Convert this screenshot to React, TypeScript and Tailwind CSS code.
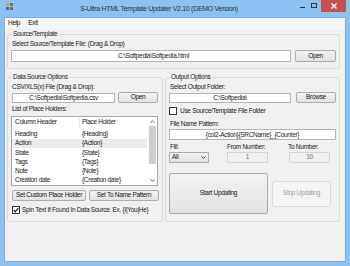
import React from "react";

const F = { fontFamily: '"Liberation Sans", Arial, sans-serif' };
const T = "text-[6.5px] tracking-[-0.3px] whitespace-nowrap";

function Btn({ w, h, children, disabled }: { w: string; h: string; children: React.ReactNode; disabled?: boolean }) {
  return (
    <div
      className={`${w} ${h} flex items-center justify-center rounded-[2px] border ${T} leading-none ${
        disabled
          ? "border-[#d9d9d9] bg-[#f4f4f4] text-[#a0a0a0]"
          : "border-[#adadad] bg-gradient-to-b from-[#f2f2f2] to-[#e3e3e3] text-[#111]"
      }`}
    >
      {children}
    </div>
  );
}

function Check() {
  return (
    <div className="w-[8px] h-[8px] border border-[#333] bg-white flex items-center justify-center">
      <svg width="6" height="6" viewBox="0 0 6 6">
        <path d="M0.8 3.2 L2.3 4.8 L5.2 1" stroke="#111" strokeWidth="1.2" fill="none" />
      </svg>
    </div>
  );
}

function GroupLabel({ children }: { children: React.ReactNode }) {
  return (
    <div className={`absolute -top-[5px] left-[4px] bg-[#f0f0f0] px-[1px] ${T} leading-[8px] text-[#222]`}>
      {children}
    </div>
  );
}

const rows: [string, string][] = [
  ["Heading", "{Heading}"],
  ["Action", "{Action}"],
  ["State", "{State}"],
  ["Tags", "{Tags}"],
  ["Note", "{Note}"],
  ["Creation date", "{Creation date}"],
];

export default function App() {
  return (
    <div style={F} className="w-[350px] h-[266px] bg-[#8cc2f1] flex flex-col px-[4px] pb-[4px] overflow-hidden text-[#1a1a1a]">
      {/* Title bar */}
      <div className="h-[17px] flex items-start relative">
        <div className="mt-[3px] ml-[2px] w-[7px] h-[7px]">
          <svg width="7" height="7" viewBox="0 0 7 7">
            <rect x="0" y="0" width="3" height="3" fill="#e0a020" />
            <rect x="4" y="0" width="3" height="3" fill="#3a9a3a" />
            <rect x="0" y="4" width="3" height="3" fill="#2a6fd0" />
            <rect x="4" y="4" width="3" height="3" fill="#d04040" />
          </svg>
        </div>
        <div className="flex-1 text-center text-[7px] tracking-[-0.3px] leading-[17px] text-[#333] pl-[8px] whitespace-nowrap">
          S-Ultra HTML Template Updater V2.10 (DEMO Version)
        </div>
        <div className="flex items-start h-[12px]">
          <div className="w-[10px] h-[12px] flex items-center justify-center">
            <div className="w-[5px] h-[1px] bg-[#333] mt-[3px]" />
          </div>
          <div className="w-[13px] h-[12px] flex items-center justify-center">
            <div className="w-[6px] h-[5px] border border-[#333] -mt-[2px]" />
          </div>
          <div className="w-[25px] h-[12px] bg-[#c75050] flex items-center justify-center ml-[1px]">
            <svg width="6" height="6" viewBox="0 0 6 6">
              <path d="M0.5 0.5 L5.5 5.5 M5.5 0.5 L0.5 5.5" stroke="#fff" strokeWidth="1.4" />
            </svg>
          </div>
        </div>
      </div>

      {/* Client area */}
      <div className="flex-1 bg-[#f0f0f0] border border-[#79aee0] flex flex-col">
        {/* Menu */}
        <div className={`h-[11px] bg-[#f5f6f7] flex items-center ${T} leading-none text-[#111]`}>
          <span className="ml-[3px]">Help</span>
          <span className="ml-[8px]">Exit</span>
        </div>

        {/* Source/Template group */}
        <div className="relative mt-[5px] ml-[2px] w-[333px] h-[35px] border border-[#dadada] rounded-[3px]">
          <GroupLabel>Source/Template</GroupLabel>
          <div className={`mt-[5px] ml-[4px] ${T} leading-[8px]`}>Select Source/Template File: (Drag &amp; Drop)</div>
          <div className="mt-[2px] ml-[3px] flex items-center">
            <div className={`w-[280px] h-[12px] bg-white border border-[#b5b5b5] ${T} leading-[10px] pl-[106px]`}>
              C:\Softpedia\Softpedia.html
            </div>
            <div className="ml-[4px]">
              <Btn w="w-[41px]" h="h-[12px]">Open</Btn>
            </div>
          </div>
        </div>

        {/* Lower groups */}
        <div className="flex mt-[8px] ml-[2px] gap-[2px]">
          {/* Data Source Options */}
          <div className="relative w-[156px] h-[145px] border border-[#dadada] rounded-[3px]">
            <GroupLabel>Data Source Options</GroupLabel>
            <div className={`mt-[5px] ml-[4px] ${T} leading-[8px]`}>CSV/XLS(x) File (Drag &amp; Drop):</div>
            <div className="mt-[1px] ml-[4px] flex items-center h-[11px]">
              <div className={`w-[103px] h-[10px] bg-white border border-[#b5b5b5] ${T} leading-[8px] text-center`}>
                C:\Softpedia\Softpedia.csv
              </div>
              <div className="ml-[3px]">
                <Btn w="w-[40px]" h="h-[11px]">Open</Btn>
              </div>
            </div>
            <div className={`mt-[2px] ml-[4px] ${T} leading-[8px]`}>List of Place Holders:</div>
            <div className={`mt-[3px] ml-[3px] w-[147px] h-[70px] bg-white border border-[#a8a8a8] flex ${T}`}>
              <div className="flex-1 flex flex-col">
                <div className="h-[12px] flex items-center">
                  <span className="ml-[3px] w-[64px] leading-none">Column Header</span>
                  <div className="w-[1px] h-[9px] bg-[#e5e5e5]" />
                  <span className="ml-[2px] leading-none">Place Holder</span>
                </div>
                <div className="mt-[2px] flex flex-col">
                  {rows.map(([a, b]) => (
                    <div key={a} className={`h-[9.2px] flex items-center ${a === "Action" ? "bg-[#ececec]" : ""}`}>
                      <span className="ml-[3px] w-[65px] leading-none">{a}</span>
                      <span className="ml-[2px] leading-none">{b}</span>
                    </div>
                  ))}
                </div>
              </div>
              <div className="w-[10px] flex flex-col items-center">
                <div className="h-[9px] flex items-center justify-center">
                  <svg width="5" height="3" viewBox="0 0 5 3">
                    <path d="M0.5 2.6 L2.5 0.6 L4.5 2.6" stroke="#555" strokeWidth="0.9" fill="none" />
                  </svg>
                </div>
                <div className="w-[7px] h-[38px] bg-[#cdcdcd]" />
                <div className="flex-1" />
                <div className="h-[9px] flex items-center justify-center">
                  <svg width="5" height="3" viewBox="0 0 5 3">
                    <path d="M0.5 0.4 L2.5 2.4 L4.5 0.4" stroke="#555" strokeWidth="0.9" fill="none" />
                  </svg>
                </div>
              </div>
            </div>
            <div className="mt-[4px] ml-[4px] flex gap-[3px]">
              <Btn w="w-[74px]" h="h-[11px]">Set Custom Place Holder</Btn>
              <Btn w="w-[70px]" h="h-[11px]">Set To Name Pattern</Btn>
            </div>
            <div className="mt-[5px] ml-[4px] flex items-center h-[8px]">
              <Check />
              <span className={`ml-[2px] ${T} leading-none`}>Spin Text If Found In Data Source. Ex. {"{I|You|He}"}</span>
            </div>
          </div>

          {/* Output Options */}
          <div className="relative w-[175px] h-[145px] border border-[#dadada] rounded-[3px]">
            <GroupLabel>Output Options</GroupLabel>
            <div className={`mt-[5px] ml-[4px] ${T} leading-[8px]`}>Select Output Folder:</div>
            <div className="mt-[1px] ml-[3px] flex items-center h-[11px]">
              <div className={`w-[122px] h-[10px] bg-white border border-[#b5b5b5] ${T} leading-[8px] text-center`}>
                C:\Softpedia\
              </div>
              <div className="ml-[5px]">
                <Btn w="w-[40px]" h="h-[11px]">Browse</Btn>
              </div>
            </div>
            <div className="mt-[4px] ml-[3px] flex items-center h-[8px]">
              <div className="w-[8px] h-[8px] border border-[#333] bg-white" />
              <span className={`ml-[3px] ${T} leading-none`}>Use Source/Template File Folder</span>
            </div>
            <div className={`mt-[5px] ml-[4px] ${T} leading-[8px]`}>File Name Pattern:</div>
            <div className={`mt-[1px] ml-[3px] w-[167px] h-[11px] bg-white border border-[#b5b5b5] ${T} leading-[9px] text-center`}>
              {"{col2-Action}{SRCName}_{Counter}"}
            </div>
            <div className={`mt-[3px] flex ${T} leading-[8px]`}>
              <span className="ml-[4px] w-[57px]">Fill:</span>
              <span className="w-[61px]">From Number:</span>
              <span>To Number:</span>
            </div>
            <div className={`mt-[1px] ml-[3px] flex items-center h-[11px] ${T}`}>
              <div className="w-[40px] h-[11px] border border-[#adadad] bg-gradient-to-b from-[#f2f2f2] to-[#e3e3e3] flex items-center justify-between px-[2px] leading-none">
                <span>All</span>
                <svg width="5" height="3" viewBox="0 0 5 3">
                  <path d="M0.5 0.4 L2.5 2.4 L4.5 0.4" stroke="#333" strokeWidth="0.9" fill="none" />
                </svg>
              </div>
              <div className="ml-[18px] w-[41px] h-[11px] border border-[#d5d5d5] bg-[#f0f0f0] flex items-center justify-center text-[#777] leading-none">1</div>
              <div className="ml-[21px] w-[41px] h-[11px] border border-[#d5d5d5] bg-[#f0f0f0] flex items-center justify-center text-[#777] leading-none">10</div>
            </div>
            <div className="mt-[10px] ml-[3px] flex items-center">
              <Btn w="w-[99px]" h="h-[41px]">Start Updating</Btn>
              <div className="ml-[4px]">
                <Btn w="w-[59px]" h="h-[26px]" disabled>Stop Updating</Btn>
              </div>
            </div>
          </div>
        </div>
      </div>
    </div>
  );
}
